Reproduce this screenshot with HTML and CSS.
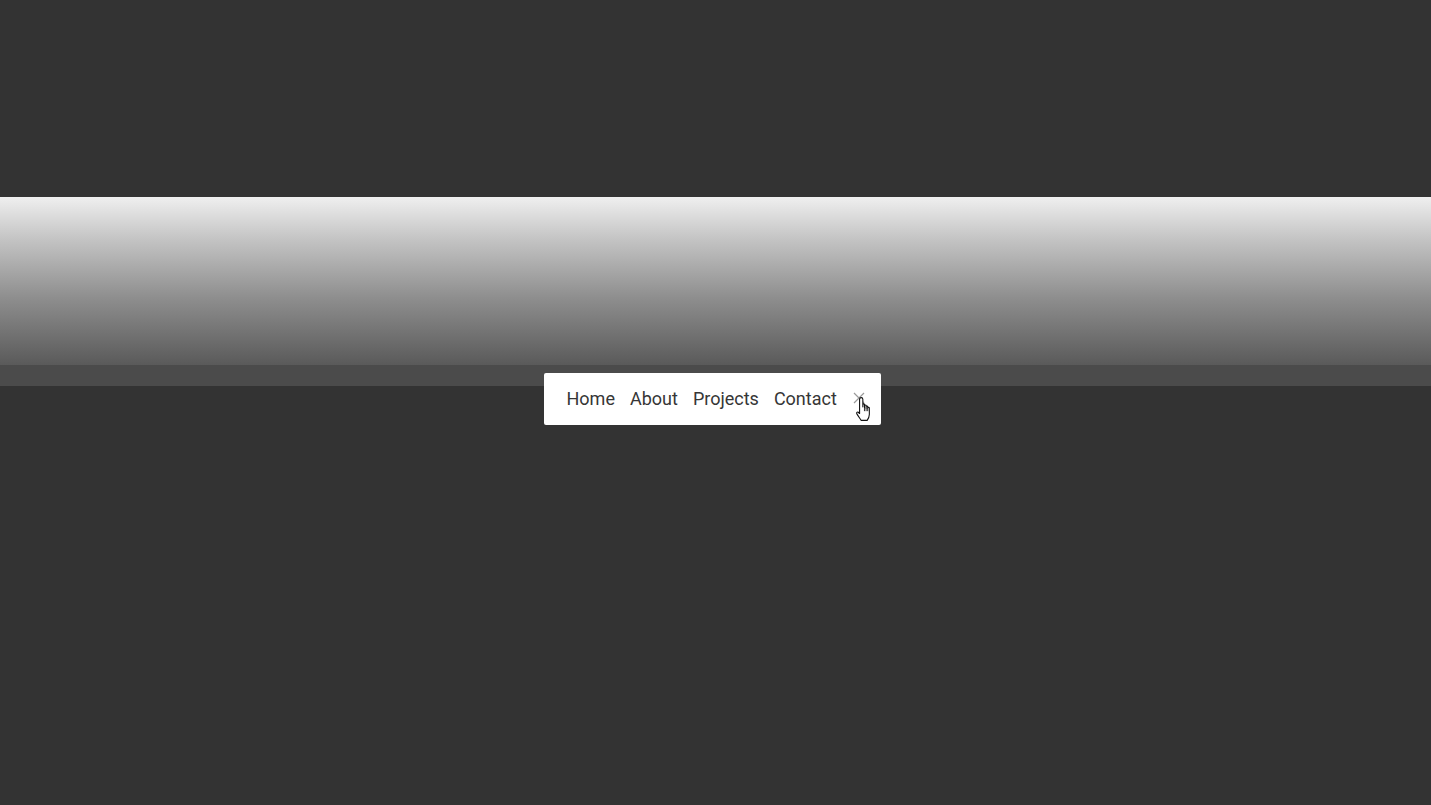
FILE: index.html
```html
<!DOCTYPE html>
<html>
<head>
<meta charset="utf-8">
<link rel="stylesheet" href="styles.css">
</head>
<body>
<div class="page">
  <div class="hero"></div>
  <div class="band"></div>
  <nav class="menu">
    <a class="link" href="#">Home</a>
    <a class="link" href="#">About</a>
    <a class="link" href="#">Projects</a>
    <a class="link" href="#">Contact</a>
    <button class="close" aria-label="Close">
      <svg width="12" height="12" viewBox="0 0 12 12"><path d="M1 1 L11 11 M11 1 L1 11" stroke="#9a9a9a" stroke-width="1.2" fill="none"/></svg>
    </button>
  </nav>
  <svg class="cursor" width="20" height="26" viewBox="0 0 18 24">
    <path d="M5.5 1.5 C6.5 1.5 7 2 7 3 L7 10 L7 8 C7 7 8.5 7 8.5 8 L8.5 10.5 L8.5 9 C8.5 8 10 8 10 9 L10 11 L10 10 C10 9 11.5 9 11.5 10 L11.5 11 C11.5 10.2 13 10.2 13 11 L13 17 C13 19 12 21 11 22.5 L5.5 22.5 C4.5 21 3 19 1.5 16.5 C0.8 15.3 1.8 14.3 2.8 15 L4 16.2 L4 3 C4 2 4.5 1.5 5.5 1.5 Z" fill="#ffffff" stroke="#111111" stroke-width="1" stroke-linejoin="round"/>
    <path d="M8.5 10.5 L8.5 14 M10 11 L10 14 M11.5 11 L11.5 14" stroke="#111111" stroke-width="0.8"/>
  </svg>
</div>
</body>
</html>
```
FILE: styles.css
```css
html, body {
  margin: 0;
  padding: 0;
  background: #333333;
  height: 100%;
}
.page {
  position: relative;
  height: 805px;
  padding-top: 197px;
  box-sizing: border-box;
  font-family: Roboto, "Liberation Sans", sans-serif;
}
.hero {
  height: 168px;
  background: linear-gradient(to bottom, #efefef 0%, #c4c4c4 25%, #8e8e8e 60%, #5a5a5a 100%);
}
.band {
  height: 21px;
  background: #4b4b4b;
}
.menu {
  position: absolute;
  left: 544px;
  top: 373px;
  width: 337px;
  height: 52px;
  box-sizing: border-box;
  background: #ffffff;
  border-radius: 2px;
  display: flex;
  align-items: center;
  padding-left: 15px;
}
.link {
  font-size: 18px;
  color: #363636;
  text-decoration: none;
  padding: 0 7.5px;
  line-height: 52px;
}
.close {
  border: 0;
  background: transparent;
  padding: 0;
  margin-left: 9px;
  width: 12px;
  height: 12px;
  display: flex;
  align-items: center;
  justify-content: center;
  margin-top: -2px;
}
.cursor {
  position: absolute;
  left: 855px;
  top: 396px;
}
```
